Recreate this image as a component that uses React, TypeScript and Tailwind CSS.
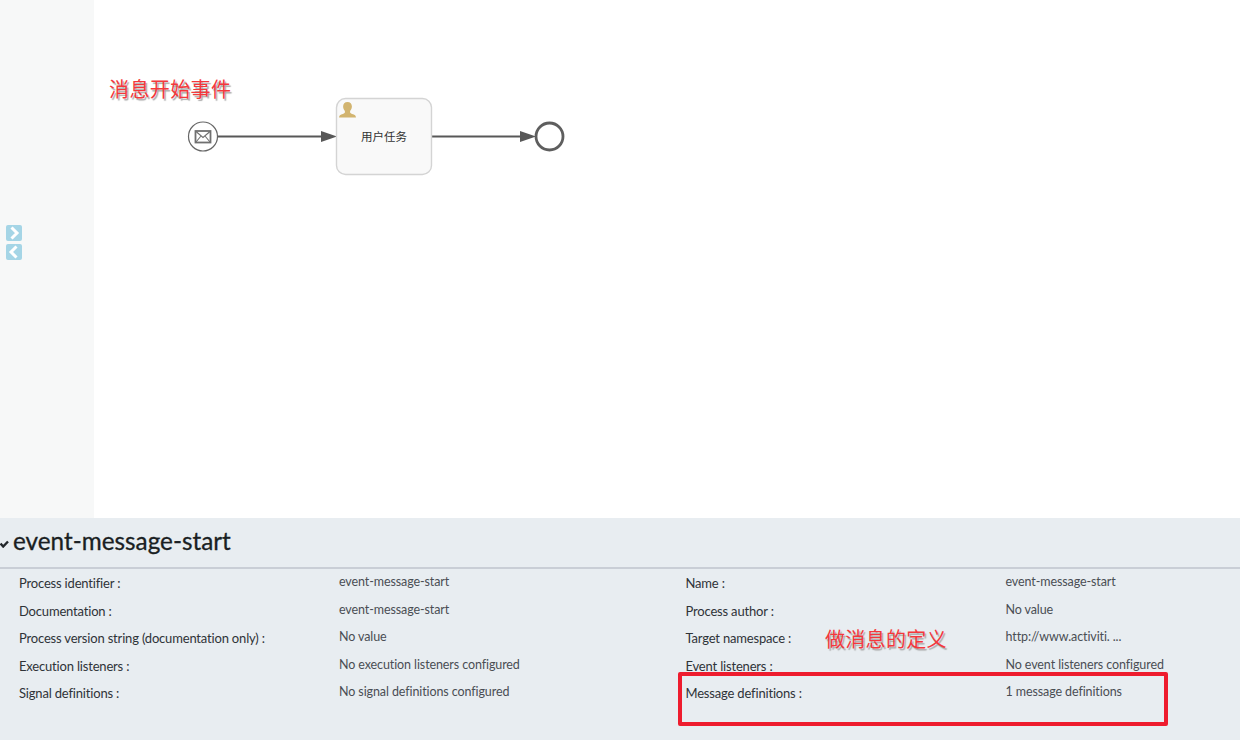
const leftRows = [
  ["Process identifier :", "event-message-start"],
  ["Documentation :", "event-message-start"],
  ["Process version string (documentation only) :", "No value"],
  ["Execution listeners :", "No execution listeners configured"],
  ["Signal definitions :", "No signal definitions configured"],
];

const rightRows = [
  ["Name :", "event-message-start"],
  ["Process author :", "No value"],
  ["Target namespace :", "http://www.activiti. ..."],
  ["Event listeners :", "No event listeners configured"],
  ["Message definitions :", "1 message definitions"],
];

function PropertyColumn({ rows, className }: { rows: string[][]; className: string }) {
  return (
    <div className={className}>
      {rows.map(([label, value]) => (
        <div key={label} className="flex h-[27.6px]">
          <div className="w-[320px] pt-[4px] text-[13px] leading-[20px] tracking-[-0.18px] text-[#2f3338]">{label}</div>
          <div className="pt-[3px] text-[12.5px] leading-[20px] tracking-[-0.1px] text-[#4a4e54]">{value}</div>
        </div>
      ))}
    </div>
  );
}

function Diagram() {
  return (
    <svg width="480" height="120" viewBox="94 80 480 120" className="absolute left-[94px] top-[80px]">
      {/* message start event */}
      <circle cx="203" cy="136.5" r="14.5" fill="#fff" stroke="#666" strokeWidth="1.2" />
      <rect x="195.5" y="131" width="15" height="11.5" fill="none" stroke="#707070" strokeWidth="1.8" />
      <path d="M196 131.5l7 6 7-6M196 142l5-6M210 142l-5-6" fill="none" stroke="#707070" strokeWidth="1.1" />
      {/* flows */}
      <path d="M218 136.5H322" stroke="#585858" strokeWidth="1.8" />
      <path d="M337 136.5l-16-5.5v11z" fill="#585858" />
      <path d="M431 136.5H522" stroke="#585858" strokeWidth="1.8" />
      <path d="M536 136.5l-16-5.5v11z" fill="#585858" />
      {/* user task */}
      <rect x="336.5" y="98.5" width="95" height="76" rx="9" fill="#f9f9f9" stroke="#d4d4d4" strokeWidth="1.4" />
      <path
        d="M347.5 102c2.8 0 4.4 2 4.4 4.6 0 1.9-.8 3.4-1.8 4.3v1.5c.3.8 1.5 1.2 3 1.8 1.6.6 2.7 1.3 2.9 3.3h-17c.2-2 1.3-2.7 2.9-3.3 1.5-.6 2.7-1 3-1.8v-1.5c-1-.9-1.8-2.4-1.8-4.3 0-2.6 1.6-4.6 4.4-4.6z"
        fill="#d2b46f"
      />
      {/* end event */}
      <circle cx="549.5" cy="136.5" r="13.5" fill="#fff" stroke="#5e5e5e" strokeWidth="2.8" />
    </svg>
  );
}

function PagerButton({ direction }: { direction: "next" | "prev" }) {
  return (
    <div className="flex h-[16px] w-[16px] items-center justify-center rounded-[2px] bg-[#a5d5e6]">
      <svg width="14" height="14" viewBox="0 0 14 14">
        <path
          d={direction === "next" ? "M4.5 1.5L10 7 4.5 12.5" : "M9.5 1.5L4 7 9.5 12.5"}
          fill="none"
          stroke="#fff"
          strokeWidth="3"
        />
      </svg>
    </div>
  );
}

export default function App() {
  return (
    <div className="relative flex h-[740px] w-[1240px] flex-col overflow-hidden bg-white font-['Lato','Noto_Sans_CJK_SC',sans-serif]">
      <div className="flex h-[518px] shrink-0">
        <aside className="flex w-[94px] shrink-0 flex-col gap-[3px] bg-[#f7f8f8] pl-[6px] pt-[225px]">
          <PagerButton direction="next" />
          <PagerButton direction="prev" />
        </aside>
        <main className="flex-1 bg-white" />
      </div>

      <section className="flex-1 bg-[#e8edf1]">
        <div className="flex h-[51px] items-center border-b-2 border-[#c9ced6]">
          <svg width="9" height="8" viewBox="0 0 9 8" className="mt-[3px]">
            <path d="M0.5 3.5L3.2 6.5 8 1.5" fill="none" stroke="#22272b" strokeWidth="2.4" />
          </svg>
          <h1 className="ml-[4px] mt-[-2px] text-[24.3px] font-normal leading-none text-[#1a1f23] [-webkit-text-stroke:0.3px_#1a1f23]">
            event-message-start
          </h1>
        </div>
        <div className="flex">
          <PropertyColumn rows={leftRows} className="ml-[19px] w-[666.5px]" />
          <PropertyColumn rows={rightRows} className="flex-1" />
        </div>
      </section>

      {/* annotations pasted over the screenshot */}
      <Diagram />
      <div className="absolute left-[361px] top-[129px] text-[11.5px] leading-[16px] text-[#333]">用户任务</div>
      <div className="absolute left-[109px] top-[76px] text-[20px] leading-[26px] tracking-[0.4px] text-[#f4383c] [text-shadow:1.5px_1.5px_1px_#aaa]">
        消息开始事件
      </div>
      <div className="absolute left-[825px] top-[626px] text-[20px] leading-[26px] tracking-[0.3px] text-[#f4383c] [text-shadow:1.5px_1.5px_1px_#aaa]">
        做消息的定义
      </div>
      <div className="absolute left-[678px] top-[672px] h-[54px] w-[490px] rounded-[2px] border-[4px] border-[#ee1c2e]" />
    </div>
  );
}
